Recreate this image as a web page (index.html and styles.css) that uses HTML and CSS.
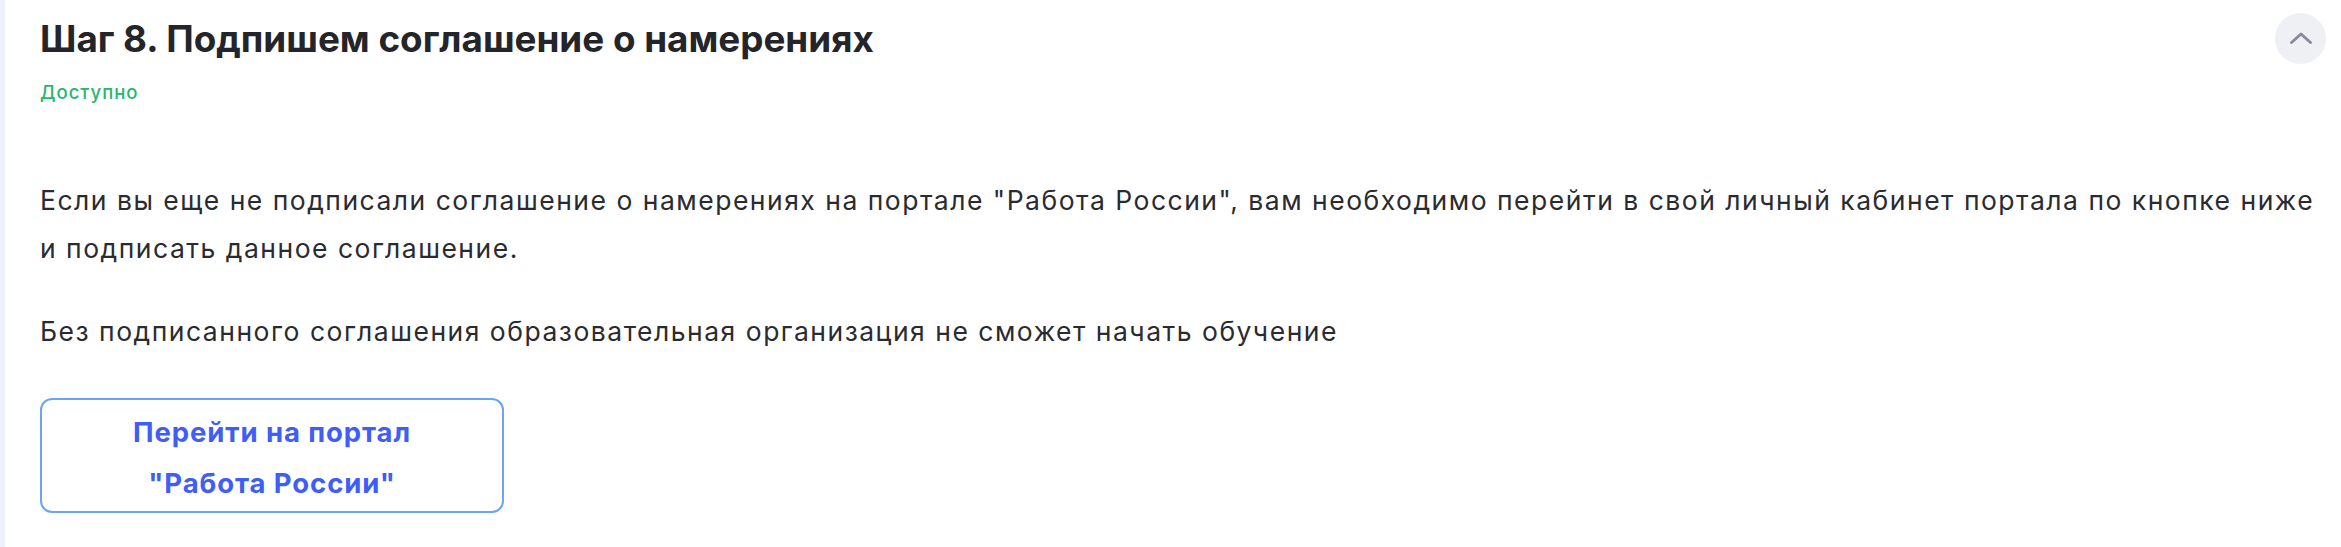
FILE: index.html
```html
<!DOCTYPE html>
<html lang="ru">
<head>
<meta charset="utf-8">
<title>Шаг 8</title>
<link rel="stylesheet" href="styles.css">
</head>
<body>
<div class="page">
  <div class="strip"></div>
  <section class="step">
    <header class="step-head">
      <div class="step-titles">
        <h2 class="step-title">Шаг 8. Подпишем соглашение о намерениях</h2>
        <div class="step-status">Доступно</div>
      </div>
      <button class="collapse" type="button" aria-label="Свернуть">
        <svg width="24" height="14" viewBox="0 0 24 14"><path d="M2.5 11.5 L12 3 L21.5 11.5" fill="none" stroke="#8b89a3" stroke-width="3" stroke-linecap="round" stroke-linejoin="round"/></svg>
      </button>
    </header>
    <div class="step-body">
      <p class="text">Если вы еще не подписали соглашение о намерениях на портале "Работа России", вам необходимо перейти в свой личный кабинет портала по кнопке ниже и подписать данное соглашение.</p>
      <p class="text text-last">Без подписанного соглашения образовательная организация не сможет начать обучение</p>
      <a class="portal-btn" href="#">Перейти на портал<br>"Работа России"</a>
    </div>
  </section>
</div>
</body>
</html>
```

FILE: styles.css
```css
* { box-sizing: border-box; }
html, body { margin: 0; padding: 0; background: #ffffff; }
body { font-family: Inter, "Noto Sans", sans-serif; color: #26272d; }
.page { display: flex; min-height: 547px; }
.strip { width: 5px; flex: none; background: #edf1f8; }
.step { flex: 1; padding: 13px 15px 0 35px; }
.step-head { display: flex; justify-content: space-between; align-items: flex-start; }
.step-titles { padding-top: 2px; }
.step-title { margin: 0; font-size: 36.8px; line-height: 48px; font-weight: 700; color: #24252b; }
.step-status { margin-top: 16px; font-size: 18.5px; line-height: 27px; font-weight: 500; letter-spacing: 1px; color: #29b56e; }
.collapse { width: 51px; height: 51px; border-radius: 50%; border: 0; background: #eef0f4; display: flex; align-items: center; justify-content: center; padding: 0 0 2px; flex: none; }
.step-body { padding: 70px 0 0 0; }
.text { margin: 0 0 35px; font-size: 26.5px; line-height: 48px; letter-spacing: 1.5px; color: #2a2b31; }
.text-last { margin-bottom: 43px; }
.portal-btn { display: flex; align-items: center; justify-content: center; text-align: center; width: 464px; height: 115px; padding-top: 4px; border: 2px solid #6aa4f3; border-radius: 12px; color: #3e5ef6; font-size: 27.5px; line-height: 51px; letter-spacing: 0.9px; font-weight: 700; text-decoration: none; }
```
